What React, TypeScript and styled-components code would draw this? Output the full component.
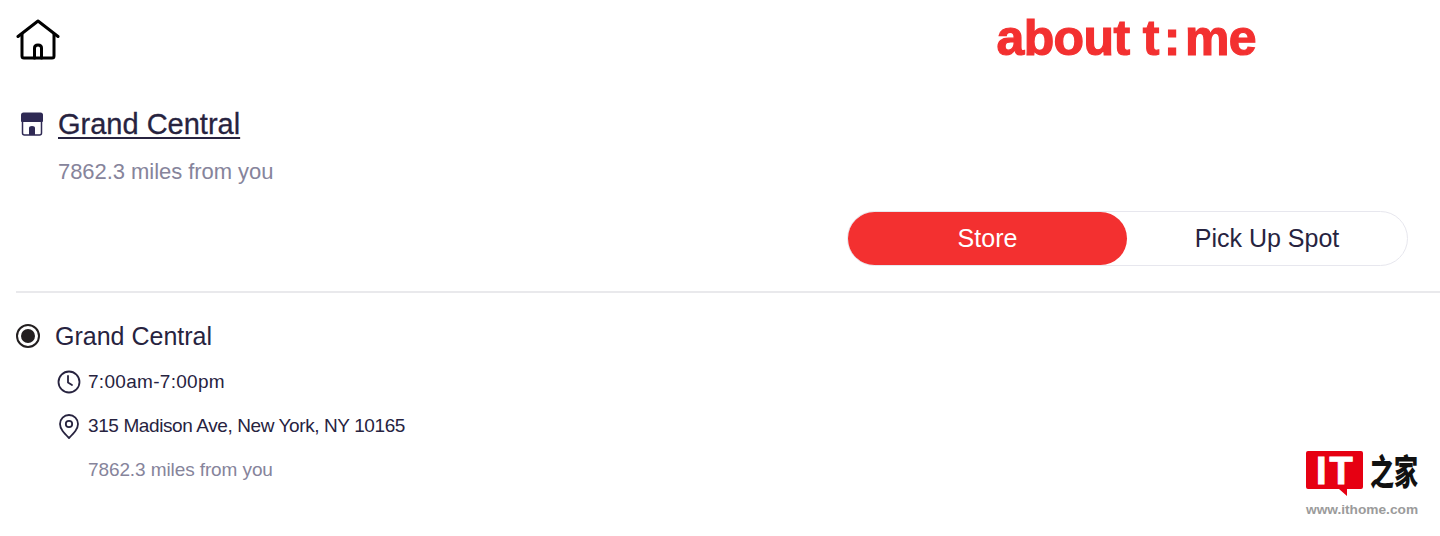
import React from 'react';
import styled, { createGlobalStyle } from 'styled-components';

const GlobalStyle = createGlobalStyle`
  html, body {
    margin: 0;
    padding: 0;
    background: #fff;
    font-family: "Liberation Sans", Arial, sans-serif;
    color: #27233f;
  }
`;

const Page = styled.div`
  position: relative;
  width: 1440px;
  height: 536px;
  overflow: hidden;
  padding-left: 16px;
  box-sizing: border-box;
`;

const Header = styled.header`
  display: flex;
  justify-content: space-between;
  align-items: flex-start;
  height: 62px;
  padding-top: 18px;
  padding-right: 184px;
  box-sizing: border-box;
`;

const HomeButton = styled.div`
  width: 44px;
  height: 44px;
`;

const Logo = styled.div`
  font-weight: 700;
  font-size: 50px;
  line-height: 40px;
  letter-spacing: -0.6px;
  color: #f33030;
  white-space: nowrap;
  -webkit-text-stroke: 1.2px #f33030;
`;

const LogoColon = styled.span`
  margin: 0 5px;
`;

const StoreSection = styled.section`
  padding-top: 42px;
`;

const StoreTitleRow = styled.div`
  display: flex;
  align-items: center;
  gap: 13px;
  padding-left: 3px;
  height: 40px;
`;

const StoreTitle = styled.a`
  font-size: 29px;
  color: #27233f;
  text-decoration: underline;
  text-underline-offset: 3px;
  text-decoration-thickness: 2px;
  -webkit-text-stroke: 0.3px #27233f;
`;

const Distance = styled.div<{ $size: number; $indent: number; $top: number; $tracking: number }>`
  font-size: ${(props) => props.$size}px;
  letter-spacing: ${(props) => props.$tracking}px;
  color: #86849b;
  margin-top: ${(props) => props.$top}px;
  padding-left: ${(props) => props.$indent}px;
  line-height: 28px;
`;

const ToggleRow = styled.div`
  display: flex;
  justify-content: flex-end;
  padding-right: 32px;
  margin-top: 25px;
`;

const Toggle = styled.div`
  display: grid;
  grid-template-columns: 279px 1fr;
  width: 561px;
  height: 55px;
  box-sizing: border-box;
  border: 1.5px solid #e7e7ee;
  border-radius: 28px;
`;

const ToggleOption = styled.div<{ $active?: boolean }>`
  display: flex;
  align-items: center;
  justify-content: center;
  border-radius: 27px;
  font-size: 25px;
  color: ${(props) => (props.$active ? '#fff' : '#27233f')};
  background: ${(props) => (props.$active ? '#f33030' : 'transparent')};
`;

const Divider = styled.hr`
  border: 0;
  height: 2px;
  background: #e9e9ec;
  margin: 25px 0 0;
`;

const LocationList = styled.div`
  padding-top: 25px;
`;

const LocationHead = styled.div`
  display: flex;
  align-items: center;
  gap: 15px;
  height: 36px;
  font-size: 25px;
`;

const Radio = styled.span`
  display: flex;
  align-items: center;
  justify-content: center;
  width: 24px;
  height: 24px;
  box-sizing: border-box;
  border: 2px solid #231f20;
  border-radius: 50%;

  &::after {
    content: '';
    width: 14px;
    height: 14px;
    border-radius: 50%;
    background: #231f20;
  }
`;

const Details = styled.div`
  padding-left: 40px;
  padding-top: 6px;
`;

const DetailRow = styled.div<{ $tracking: number }>`
  display: flex;
  align-items: center;
  gap: 6px;
  height: 44px;
  font-size: 19px;
  letter-spacing: ${(props) => props.$tracking}px;
`;

const Watermark = styled.div`
  position: absolute;
  left: 1306px;
  top: 450px;
  width: 120px;
`;

const WatermarkTop = styled.div`
  display: flex;
  align-items: flex-start;
  gap: 7px;
`;

const BrandText = styled.span`
  display: inline-block;
  font-family: "Noto Sans CJK SC", sans-serif;
  font-weight: 900;
  font-size: 24px;
  line-height: 40px;
  white-space: nowrap;
  color: #111;
  transform: scaleY(1.45);
`;

const WatermarkUrl = styled.div`
  font-weight: 700;
  font-size: 13.7px;
  line-height: 16px;
  color: #9b9b9b;
  white-space: nowrap;
  margin-top: 5px;
`;

const ItBadge = styled.svg`
  flex: none;
`;

const BadgeLetters = styled.text`
  font-weight: 700;
  font-size: 38px;
  letter-spacing: 3px;
  fill: #fff;
  stroke: #fff;
  stroke-width: 1px;
`;

const App = () => (
  <Page>
    <GlobalStyle />
    <Header>
      <HomeButton>
        <svg width="44" height="44" viewBox="0 0 44 44" fill="none" stroke="#000" strokeWidth="3" strokeLinejoin="round" strokeLinecap="round">
          <path d="M2 18.5 L22 3 L42 18.5" />
          <path d="M6 16 V38 Q6 40 8 40 H36 Q38 40 38 38 V16" />
          <path d="M18.5 40 V30 Q18.5 27 22 27 Q25.5 27 25.5 30 V40" />
        </svg>
      </HomeButton>
      <Logo>about t<LogoColon>:</LogoColon>me</Logo>
    </Header>
    <StoreSection>
      <StoreTitleRow>
        <svg width="26" height="26" viewBox="0 0 26 26">
          <path d="M2 4 Q2 1.500 4.500 1.500 H21.500 Q24 1.500 24 4 V10 Q24 11 23 11 H3 Q2 11 2 10 Z" fill="#2f2a54" />
          <path d="M3.500 10 V22 Q3.500 24 5.500 24 H20.500 Q22.500 24 22.500 22 V10" fill="none" stroke="#2f2a54" strokeWidth="1.500" />
          <path d="M10 24 V17 Q10 15 13 15 Q16 15 16 17 V24 Z" fill="#2f2a54" />
        </svg>
        <StoreTitle>Grand Central</StoreTitle>
      </StoreTitleRow>
      <Distance $size={22} $indent={42} $top={14} $tracking={-0.05}>7862.3 miles from you</Distance>
    </StoreSection>
    <ToggleRow>
      <Toggle>
        <ToggleOption $active>Store</ToggleOption>
        <ToggleOption>Pick Up Spot</ToggleOption>
      </Toggle>
    </ToggleRow>
    <Divider />
    <LocationList>
      <LocationHead>
        <Radio />
        Grand Central
      </LocationHead>
      <Details>
        <DetailRow $tracking={0.3}>
          <svg width="26" height="26" viewBox="0 0 26 26" fill="none" stroke="#27233f" strokeWidth="1.800" strokeLinecap="round" strokeLinejoin="round">
            <circle cx="13" cy="13" r="10.500" />
            <path d="M12 7 V13.500 L16 16" />
          </svg>
          7:00am-7:00pm
        </DetailRow>
        <DetailRow $tracking={-0.4}>
          <svg width="26" height="26" viewBox="0 0 26 26" fill="none" stroke="#27233f" strokeWidth="1.800" strokeLinejoin="round">
            <path d="M13 25 C8 20 4 16 4 11 A9 9 0 0 1 22 11 C22 16 18 20 13 25 Z" />
            <circle cx="13" cy="11" r="3.200" />
          </svg>
          315 Madison Ave, New York, NY 10165
        </DetailRow>
        <Distance $size={19} $indent={32} $top={8} $tracking={-0.1}>7862.3 miles from you</Distance>
      </Details>
    </LocationList>
    <Watermark>
      <WatermarkTop>
        <ItBadge width="57" height="47" viewBox="0 0 57 47">
          <path d="M2 1 H55 Q57 1 57 3 V37 Q57 39 55 39 H41 L41 46 L33 39 H2 Q0 39 0 37 V3 Q0 1 2 1 Z" fill="#e60012" />
          <BadgeLetters x="10" y="34">IT</BadgeLetters>
        </ItBadge>
        <BrandText>之家</BrandText>
      </WatermarkTop>
      <WatermarkUrl>www.ithome.com</WatermarkUrl>
    </Watermark>
  </Page>
);

export default App;
